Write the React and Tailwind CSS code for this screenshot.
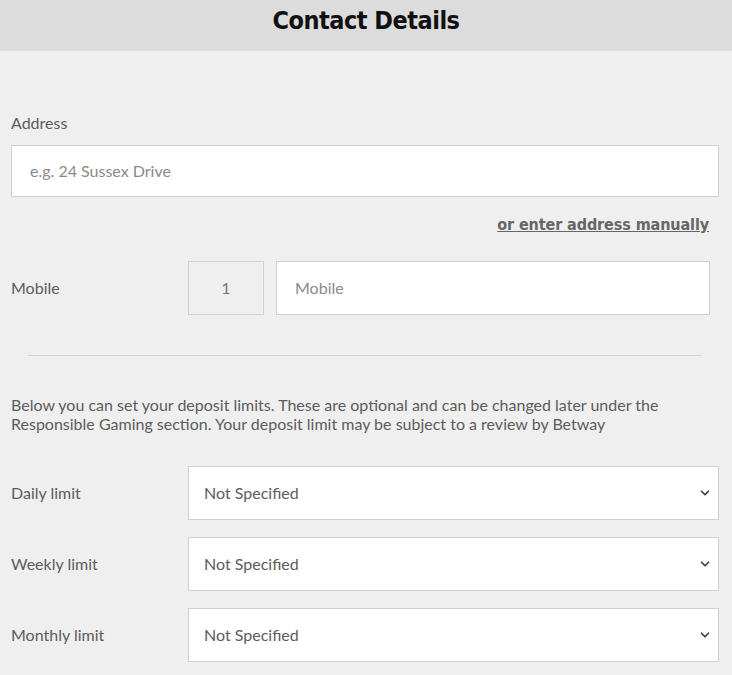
import { ChevronDown } from "lucide-react";

const limits = ["Daily limit", "Weekly limit", "Monthly limit"];

function LimitRow({ label }) {
  return (
    <div className="flex items-center h-[54px]">
      <div className="w-[177px] text-[16px] text-[#5c5c5c]">{label}</div>
      <div className="flex-1 h-full flex items-center justify-between bg-white border border-[#cfcfcf] pl-[15px] pr-[6px]">
        <span className="text-[16px] text-[#5c5c5c]">Not Specified</span>
        <ChevronDown size={14} strokeWidth={3} className="text-[#444]" />
      </div>
    </div>
  );
}

export default function App() {
  return (
    <div className="min-h-[675px] bg-[#efefef] font-['Lato','Noto_Sans',sans-serif]">
      <div className="h-[51px] bg-[#dcdcdc] flex justify-center pt-[2px]">
        <h1 className="text-[25px] font-bold text-[#111] tracking-[-0.5px] font-['DejaVu_Sans_Condensed','Roboto',sans-serif]">
          Contact Details
        </h1>
      </div>

      <div className="px-[11px] pr-[13px]">
        <div className="pt-[62px] text-[16px] text-[#5c5c5c] leading-[20px]">Address</div>
        <div className="mt-[12px] h-[52px] bg-white border border-[#cfcfcf] flex items-center px-[18px]">
          <span className="text-[16px] text-[#8a8a8a]">e.g. 24 Sussex Drive</span>
        </div>

        <div className="flex justify-end pr-[10px] mt-[16px]">
          <a className="text-[16px] font-bold text-[#666] underline font-['DejaVu_Sans_Condensed','Roboto',sans-serif] tracking-[-0.1px]">
            or enter address manually
          </a>
        </div>

        <div className="flex items-center mt-[24px] pr-[9px]">
          <div className="w-[177px] text-[16px] text-[#5c5c5c]">Mobile</div>
          <div className="w-[76px] h-[54px] border border-[#cfcfcf] flex items-center justify-center text-[16px] text-[#777]">
            1
          </div>
          <div className="flex-1 ml-[12px] h-[54px] bg-white border border-[#cfcfcf] flex items-center px-[18px]">
            <span className="text-[16px] text-[#8a8a8a]">Mobile</span>
          </div>
        </div>

        <div className="mx-[17px] mt-[40px] border-t border-[#d5d5d5]"></div>

        <p className="mt-[39px] text-[16px] leading-[19px] text-[#5c5c5c]">
          Below you can set your deposit limits. These are optional and can be changed later under the
          Responsible Gaming section. Your deposit limit may be subject to a review by Betway
        </p>

        <div className="mt-[33px] flex flex-col gap-[17px]">
          {limits.map((l) => (
            <LimitRow key={l} label={l} />
          ))}
        </div>
      </div>
    </div>
  );
}
